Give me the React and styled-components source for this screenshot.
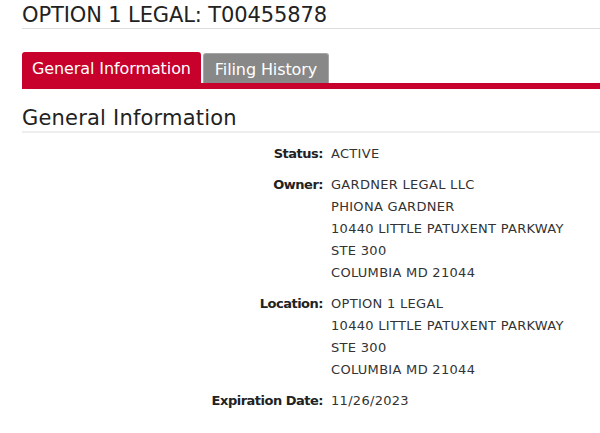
import React from "react";
import styled, { createGlobalStyle } from "styled-components";

const Global = createGlobalStyle`
  html, body { margin: 0; padding: 0; background: #fff; }
  body { font-family: "DejaVu Sans", "Open Sans", sans-serif; color: #222; }
`;

const Page = styled.div`
  padding: 3px 0 0 22px;
  width: 578px;
`;

const Title = styled.h1`
  margin: 0;
  font-size: 21px;
  font-weight: 400;
  line-height: 24px;
  color: #222;
  padding-bottom: 1px;
  border-bottom: 1px solid #ddd;
  letter-spacing: -0.12px;
`;

const Tabs = styled.div`
  display: flex;
  align-items: flex-end;
  margin-top: 23px;
  border-bottom: 6px solid #c8002c;
  gap: 2px;
`;

const Tab = styled.div`
  height: ${(p) => (p.$active ? "31px" : "30px")};
  box-sizing: border-box;
  padding: 2px ${(p) => (p.$active ? "10px" : "11px")} 0;
  display: flex;
  align-items: center;
  font-size: 16px;
  font-weight: 500;
  color: #fff;
  background: ${(p) => (p.$active ? "#c8002c" : "#888")};
  border-radius: 3px 3px 0 0;
  border: ${(p) => (p.$active ? "none" : "1px solid #a5a5a5")};
  border-bottom: none;
  letter-spacing: -0.1px;
`;

const Heading = styled.h2`
  margin: 17px 0 0;
  font-size: 21px;
  font-weight: 400;
  line-height: 24px;
  color: #222;
  padding-bottom: 1px;
  border-bottom: 2px solid #eee;
  letter-spacing: 0.2px;
`;

const Details = styled.dl`
  display: grid;
  grid-template-columns: 301px 1fr;
  column-gap: 8px;
  row-gap: 9px;
  margin: 10px 0 0;
  font-size: 13px;
  line-height: 22px;
`;

const Label = styled.dt`
  text-align: right;
  font-weight: 700;
  color: #222;
  letter-spacing: -0.5px;
`;

const Value = styled.dd`
  margin: 0;
  color: #333;
  letter-spacing: 0.3px;
`;

const rows = [
  ["Status:", ["ACTIVE"]],
  ["Owner:", ["GARDNER LEGAL LLC", "PHIONA GARDNER", "10440 LITTLE PATUXENT PARKWAY", "STE 300", "COLUMBIA MD 21044"]],
  ["Location:", ["OPTION 1 LEGAL", "10440 LITTLE PATUXENT PARKWAY", "STE 300", "COLUMBIA MD 21044"]],
  ["Expiration Date:", ["11/26/2023"]],
];

export default function App() {
  return (
    <Page>
      <Global />
      <Title>OPTION 1 LEGAL: T00455878</Title>
      <Tabs>
        <Tab $active>General Information</Tab>
        <Tab>Filing History</Tab>
      </Tabs>
      <Heading>General Information</Heading>
      <Details>
        {rows.map(([label, lines]) => (
          <React.Fragment key={label}>
            <Label>{label}</Label>
            <Value>
              {lines.map((l, i) => (
                <div key={i}>{l}</div>
              ))}
            </Value>
          </React.Fragment>
        ))}
      </Details>
    </Page>
  );
}
